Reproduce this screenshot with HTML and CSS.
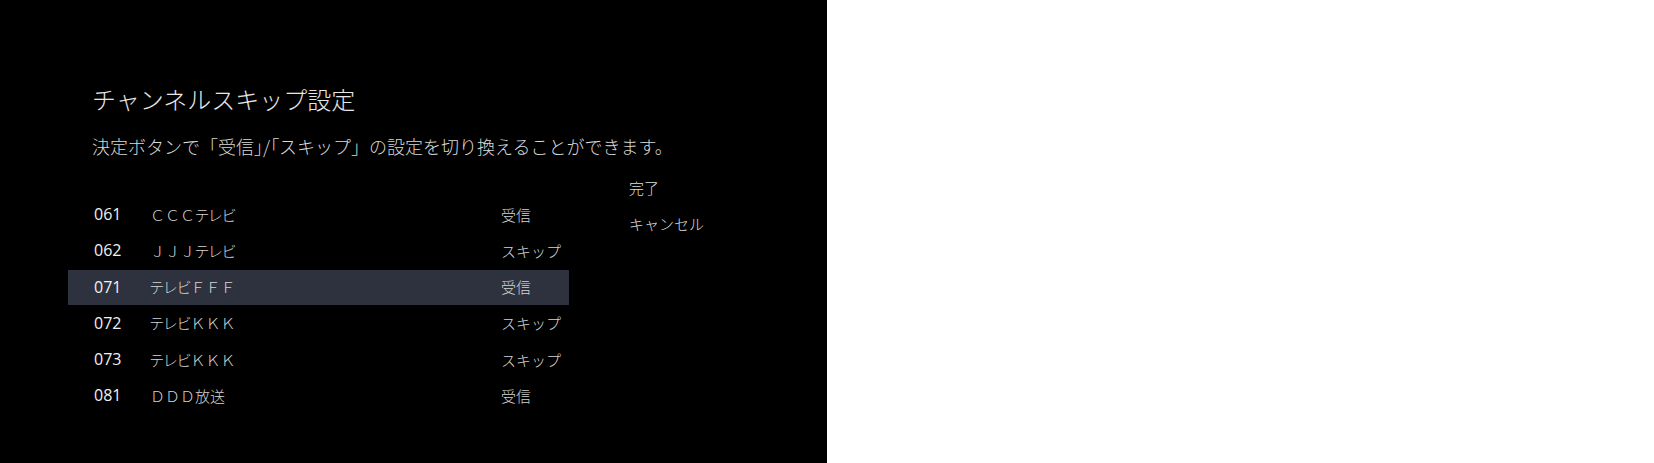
FILE: index.html
```html
<!DOCTYPE html>
<html lang="ja">
<head>
<meta charset="utf-8">
<title>チャンネルスキップ設定</title>
<link rel="stylesheet" href="styles.css">
</head>
<body>
<div class="page">
  <section class="panel">
    <h1 class="title">チャンネルスキップ設定</h1>
    <p class="subtitle">決定ボタンで「受信<span class="tight">」/「</span>スキップ」の設定を切り換えることができます。</p>
    <div class="content">
      <ul class="list">
        <li class="row"><span class="num">061</span><span class="name"><span class="fw">ＣＣＣ</span>テレビ</span><span class="status">受信</span></li>
        <li class="row"><span class="num">062</span><span class="name"><span class="fw">ＪＪＪ</span>テレビ</span><span class="status">スキップ</span></li>
        <li class="row selected"><span class="num">071</span><span class="name">テレビ<span class="fw">ＦＦＦ</span></span><span class="status">受信</span></li>
        <li class="row"><span class="num">072</span><span class="name">テレビ<span class="fw">ＫＫＫ</span></span><span class="status">スキップ</span></li>
        <li class="row"><span class="num">073</span><span class="name">テレビ<span class="fw">ＫＫＫ</span></span><span class="status">スキップ</span></li>
        <li class="row"><span class="num">081</span><span class="name"><span class="fw">ＤＤＤ</span>放送</span><span class="status">受信</span></li>
      </ul>
      <ul class="menu">
        <li class="menu-item">完了</li>
        <li class="menu-item">キャンセル</li>
      </ul>
    </div>
  </section>
  <div class="blank"></div>
</div>
</body>
</html>
```
FILE: styles.css
```css
html, body {
  margin: 0;
  padding: 0;
  background: #ffffff;
}

body {
  font-family: "Noto Sans CJK JP", "Noto Sans", sans-serif;
}

.page {
  display: flex;
  width: 1654px;
  height: 463px;
}

.panel {
  width: 827px;
  height: 463px;
  background: #000000;
  box-sizing: border-box;
  padding: 87px 0 0 68px;
  color: #dcdcdc;
}

.blank {
  flex: 1;
  background: #ffffff;
}

.title {
  margin: 0 0 0 24px;
  font-size: 24px;
  line-height: 24px;
  font-weight: 300;
  color: #e6e6e6;
}

.subtitle {
  margin: 26px 0 0 24px;
  font-size: 18px;
  line-height: 18px;
  font-weight: 300;
  color: #d8d8d8;
  white-space: nowrap;
}

.subtitle .tight {
  font-feature-settings: "palt";
}

.content {
  display: flex;
  align-items: flex-start;
  margin-top: 16px;
}

.list {
  list-style: none;
  margin: 0;
  padding: 27px 0 0 0;
  width: 501px;
  display: flex;
  flex-direction: column;
  gap: 1.2px;
}

.row {
  height: 35px;
  box-sizing: border-box;
  padding-bottom: 2.5px;
  display: flex;
  align-items: center;
  font-size: 15px;
  font-weight: 300;
  color: #d4d4d4;
}

.row.selected {
  background: #2e323e;
}

.num {
  width: 82px;
  box-sizing: border-box;
  padding-left: 26px;
  font-family: "Open Sans", "Noto Sans", sans-serif;
  font-size: 16px;
  font-weight: 400;
  color: #f0f0f0;
}

.name {
  flex: 1;
  font-feature-settings: "palt";
  white-space: nowrap;
}

.name .fw {
  font-feature-settings: normal;
}

.status {
  width: 68px;
  white-space: nowrap;
}

.menu {
  list-style: none;
  margin: 0 0 0 60px;
  padding: 0;
}

.menu-item {
  height: 35.5px;
  box-sizing: border-box;
  padding-bottom: 2px;
  display: flex;
  align-items: center;
  font-size: 15px;
  font-weight: 300;
  color: #dcdcdc;
  white-space: nowrap;
}
```
